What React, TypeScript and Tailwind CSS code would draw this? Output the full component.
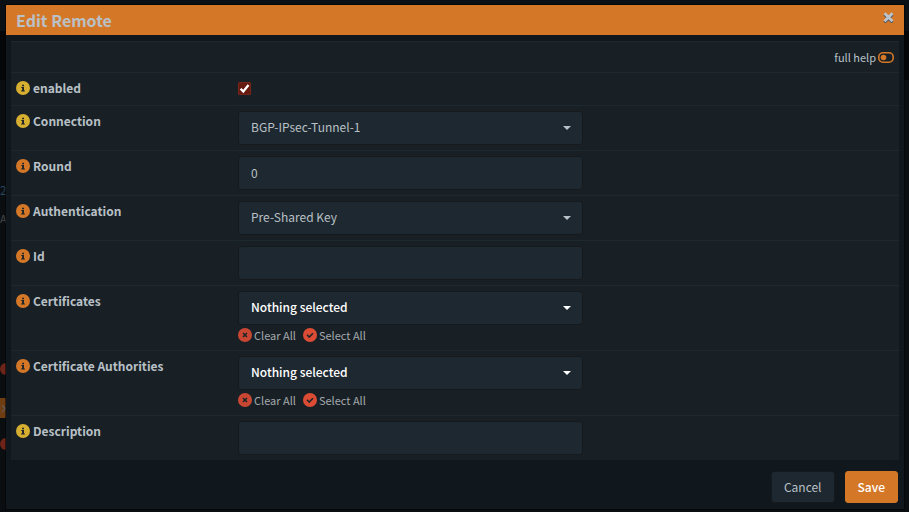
import type { ReactNode } from "react";

type Tone = "basic" | "advanced";

const controlStyle =
  "block h-[34px] w-full appearance-none rounded-[3px] border border-[#171a1c] bg-[#1e2830] px-3 pb-[2px] outline-none";

const InfoIcon = ({ tone }: { tone: Tone }) => (
  <svg viewBox="0 0 14 14" className="size-[14px] shrink-0" aria-hidden="true">
    <circle cx="7" cy="7" r="7" fill={tone === "basic" ? "#d6ae30" : "#d47828"} />
    <path d="M6.1 3.7h1.9v1.5H6.1zM5.3 6h2.7v3.4h.9v1H5.1v-1h1V7h-.8z" fill="#1f2427" />
  </svg>
);

const Row = ({ id, label, tone, children }: { id: string; label: string; tone: Tone; children: ReactNode }) => (
  <div className="flex border-t border-[#1d292e]">
    <div className="w-1/4 p-[5px]">
      <label htmlFor={id} className="flex h-5 items-center gap-[3px] font-bold">
        <InfoIcon tone={tone} />
        {label}
      </label>
    </div>
    <div className="w-[355px] p-[5px]">{children}</div>
  </div>
);

const Select = ({ id, value, empty }: { id: string; value: string; empty?: boolean }) => (
  <div className={empty ? "relative font-medium text-white" : "relative"}>
    <select id={id} className={controlStyle}>
      <option>{value}</option>
    </select>
    <svg
      viewBox="0 0 8 4"
      className="pointer-events-none absolute top-[15px] right-3 h-1 w-2"
      fill="currentColor"
      aria-hidden="true"
    >
      <path d="M0 0h8L4 4z" />
    </svg>
  </div>
);

const ListActions = () => (
  <div className="flex h-5 items-center gap-[7px] text-[11px] text-[#a4a9ac]">
    <button type="button" className="flex items-center gap-[2px]">
      <svg viewBox="0 0 14 14" className="size-[14px]" aria-hidden="true">
        <circle cx="7" cy="7" r="7" fill="#c94732" />
        <path d="M5 5l4 4M9 5l-4 4" stroke="#1f2427" strokeWidth="1.6" />
      </svg>
      Clear All
    </button>
    <button type="button" className="flex items-center gap-[2px]">
      <svg viewBox="0 0 14 14" className="size-[14px]" aria-hidden="true">
        <circle cx="7" cy="7" r="7" fill="#dc4c34" />
        <path d="M4 6.8l2.2 2.2L10 5.2" fill="none" stroke="#1f2427" strokeWidth="1.6" />
      </svg>
      Select All
    </button>
  </div>
);

// dimmed page that stays visible around the dialog
const Backdrop = () => (
  <div className="absolute inset-0 bg-[#0b0e10]" aria-hidden="true">
    <div className="h-[31px] bg-[#0a1014]" />
    <div className="h-[49px] bg-[#040607]" />
    <span className="absolute top-[180px] left-0 text-[#26465c]">2</span>
    <span className="absolute top-[208px] left-0 text-[11px] text-[#45494b]">A</span>
    <div className="absolute top-[363px] left-0 h-3 w-5 rounded-l-full bg-[#6e2419]" />
    <div className="absolute top-[398px] left-0 h-5 w-[22px] bg-[#6e3e12] text-[11px] text-[#5b6a78]">×</div>
    <div className="absolute top-[438px] left-0 h-3 w-5 rounded-l-full bg-[#6e2419]" />
  </div>
);

export default function App() {
  return (
    <div className="relative min-h-screen pt-[5px] pr-[5px] pb-[3px] pl-[6px] font-['Noto_Sans_CJK_SC',sans-serif] text-[12px] leading-5 text-[#b9c0c6]">
      <Backdrop />
      <div role="dialog" aria-labelledby="dialog-title" className="relative bg-[#10181e] ring-1 ring-black/50">
        <header className="flex h-[30px] items-start justify-between bg-[#d47828] px-[10px]">
          <h4 id="dialog-title" className="text-[16px] leading-[30px] font-bold">
            Edit Remote
          </h4>
          <button type="button" aria-label="Close" className="pt-[7px]">
            <svg viewBox="0 0 11 11" className="size-[11px]" fill="none" strokeWidth="2.8" aria-hidden="true">
              <path d="M1.5 2.5l8 8M9.5 2.5l-8 8" stroke="#4a5560" />
              <path d="M1.5 1.3l8 8M9.5 1.3l-8 8" stroke="#bcc3ca" />
            </svg>
          </button>
        </header>

        <form>
          <div className="px-[5px] pt-[6px]">
            <div className="bg-[#182026]">
              <div className="flex h-[31px] items-center justify-end border-t border-[#1d292e] px-[5px]">
                <button type="button" className="flex items-center gap-[2px] text-[11px]">
                  full help
                  <svg viewBox="0 0 16 11" className="h-[11px] w-4" aria-hidden="true">
                    <rect x=".8" y=".8" width="14.4" height="9.4" rx="4.2" fill="none" stroke="#d47828" strokeWidth="1.6" />
                    <circle cx="5.5" cy="5.5" r="2.8" fill="#d47828" />
                  </svg>
                </button>
              </div>

              <Row id="enabled" label="enabled" tone="basic">
                <div className="relative h-[22px] pt-1">
                  <input
                    id="enabled"
                    type="checkbox"
                    defaultChecked
                    className="peer block size-[13px] appearance-none rounded-[1px] border border-[#74261a] bg-[#66190e]"
                  />
                  <svg
                    viewBox="0 0 13 13"
                    className="pointer-events-none invisible absolute top-1 left-0 size-[13px] peer-checked:visible"
                    aria-hidden="true"
                  >
                    <path d="M2.6 6.8l2.7 2.7 5.2-6.4" fill="none" stroke="#fff" strokeWidth="2.3" />
                  </svg>
                </div>
              </Row>
              <Row id="connection" label="Connection" tone="basic">
                <Select id="connection" value="BGP-IPsec-Tunnel-1" />
              </Row>
              <Row id="round" label="Round" tone="advanced">
                <input id="round" type="text" defaultValue="0" className={controlStyle} />
              </Row>
              <Row id="auth" label="Authentication" tone="advanced">
                <Select id="auth" value="Pre-Shared Key" />
              </Row>
              <Row id="remote-id" label="Id" tone="advanced">
                <input id="remote-id" type="text" className={controlStyle} />
              </Row>
              <Row id="certs" label="Certificates" tone="advanced">
                <Select id="certs" value="Nothing selected" empty />
                <ListActions />
              </Row>
              <Row id="cacerts" label="Certificate Authorities" tone="advanced">
                <Select id="cacerts" value="Nothing selected" empty />
                <ListActions />
              </Row>
              <Row id="description" label="Description" tone="basic">
                <input id="description" type="text" className={controlStyle} />
              </Row>
            </div>
          </div>

          <footer className="flex justify-end gap-[10px] px-[6px] pt-[11px] pb-[6px]">
            <button type="button" className="h-8 rounded-[3px] border border-[#171a1c] bg-[#1e2830] px-3">
              Cancel
            </button>
            <button type="submit" className="h-8 rounded-[3px] border border-[#d47828] bg-[#d47828] px-3 font-medium text-white">
              Save
            </button>
          </footer>
        </form>
      </div>
    </div>
  );
}
